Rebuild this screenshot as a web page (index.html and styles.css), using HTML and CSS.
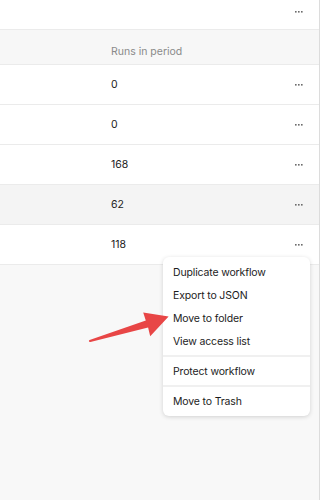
FILE: index.html
```html
<!DOCTYPE html>
<html lang="en">
  <head>
    <meta charset="UTF-8" />
    <title>Workflows</title>
    <link rel="stylesheet" href="styles.css">
  </head>
  <body>
    <div class="panel">
      <div class="table">
        <div class="row top-row">
          <span class="runs"></span>
          <svg class="more" width="8" height="2" viewBox="0 0 8 2"><rect x="0" y="0" width="1.6" height="1.6"/><rect x="3" y="0" width="1.6" height="1.6"/><rect x="6" y="0" width="1.6" height="1.6"/></svg>
        </div>
        <div class="row head-row">
          <span class="runs">Runs in period</span>
        </div>
        <div class="row">
          <span class="runs">0</span>
          <svg class="more" width="8" height="2" viewBox="0 0 8 2"><rect x="0" y="0" width="1.6" height="1.6"/><rect x="3" y="0" width="1.6" height="1.6"/><rect x="6" y="0" width="1.6" height="1.6"/></svg>
        </div>
        <div class="row">
          <span class="runs">0</span>
          <svg class="more" width="8" height="2" viewBox="0 0 8 2"><rect x="0" y="0" width="1.6" height="1.6"/><rect x="3" y="0" width="1.6" height="1.6"/><rect x="6" y="0" width="1.6" height="1.6"/></svg>
        </div>
        <div class="row">
          <span class="runs">168</span>
          <svg class="more" width="8" height="2" viewBox="0 0 8 2"><rect x="0" y="0" width="1.6" height="1.6"/><rect x="3" y="0" width="1.6" height="1.6"/><rect x="6" y="0" width="1.6" height="1.6"/></svg>
        </div>
        <div class="row hover-row">
          <span class="runs">62</span>
          <svg class="more" width="8" height="2" viewBox="0 0 8 2"><rect x="0" y="0" width="1.6" height="1.6"/><rect x="3" y="0" width="1.6" height="1.6"/><rect x="6" y="0" width="1.6" height="1.6"/></svg>
        </div>
        <div class="row">
          <span class="runs">118</span>
          <svg class="more" width="8" height="2" viewBox="0 0 8 2"><rect x="0" y="0" width="1.6" height="1.6"/><rect x="3" y="0" width="1.6" height="1.6"/><rect x="6" y="0" width="1.6" height="1.6"/></svg>
        </div>
      </div>

      <ul class="menu">
        <li>Duplicate workflow</li>
        <li>Export to JSON</li>
        <li>Move to folder</li>
        <li>View access list</li>
        <li class="divider"></li>
        <li>Protect workflow</li>
        <li class="divider"></li>
        <li>Move to Trash</li>
      </ul>

      <svg class="arrow" width="321" height="500" viewBox="0 0 321 500">
        <polygon points="89.6,339.9 145.8,320.6 143.2,312.4 168.6,316.6 150.2,336.2 148.1,327.4 90.4,342.1" fill="#e84646"/>
        <circle cx="90" cy="341" r="1.1" fill="#e84646"/>
      </svg>
    </div>
  </body>
</html>
```

FILE: styles.css
```css
body {
  margin: 0;
  background-color: #ffffff;
  font-family: Inter, "Noto Sans", sans-serif;
}

.panel {
  position: relative;
  width: 319px;
  height: 500px;
  background-color: #f8f8f8;
  border-right: 1px solid #dcdcdc;
}

.table {
  display: flex;
  flex-direction: column;
}
.row {
  display: flex;
  align-items: center;
  height: 39px;
  padding: 0 16px 0 111px;
  background-color: #ffffff;
  border-bottom: 1px solid #ebebeb;
  font-size: 10.5px;
  color: #222222;
}
.top-row {
  height: 29px;
  align-items: flex-start;
}
.top-row .more {
  margin-top: 11px;
}
.head-row {
  box-sizing: border-box;
  height: 35px;
  padding-top: 8px;
  background-color: #f7f7f7;
  color: #8a8a8a;
}
.hover-row {
  background-color: #f4f4f4;
}
.runs {
  flex: 1;
}
.more {
  fill: #6b6b6b;
}

.menu {
  position: absolute;
  left: 163px;
  top: 257px;
  width: 147px;
  margin: 0;
  padding: 4px 0 3px;
  list-style: none;
  background-color: #ffffff;
  border-radius: 6px;
  box-shadow: 0 1px 4px rgba(0, 0, 0, 0.16);
  font-size: 10.5px;
  letter-spacing: -0.15px;
  color: #1c1c1c;
}
.menu li {
  height: 23px;
  line-height: 23px;
  padding-left: 10px;
}
.menu .divider {
  height: 2px;
  padding: 0;
  margin: 2px 0 3px;
  background-color: #f0f0f0;
}

.arrow {
  position: absolute;
  left: 0;
  top: 0;
  pointer-events: none;
}
```
